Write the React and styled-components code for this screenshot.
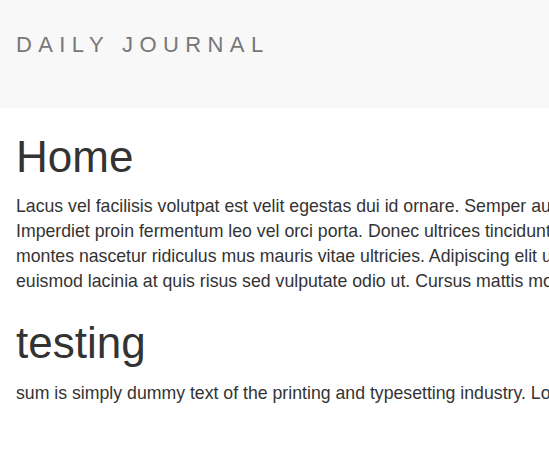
import React from 'react';
import styled, { createGlobalStyle } from 'styled-components';

const homeLines = [
	'Lacus vel facilisis volutpat est velit egestas dui id ornare. Semper auctor neque vitae tempus quam. Sit amet cursus sit amet dictum sit amet justo. Viverra tellus in hac habitasse.',
	'Imperdiet proin fermentum leo vel orci porta. Donec ultrices tincidunt arcu non sodales neque sodales ut. Mattis molestie a iaculis at erat pellentesque adipiscing. Magnis dis parturient',
	'montes nascetur ridiculus mus mauris vitae ultricies. Adipiscing elit ut aliquam purus sit amet luctus venenatis lectus. Ultrices vitae auctor eu augue ut lectus arcu bibendum at. Odio',
	'euismod lacinia at quis risus sed vulputate odio ut. Cursus mattis molestie a iaculis at erat pellentesque adipiscing.',
];

const posts = [
	{
		title: 'testing',
		body: 'sum is simply dummy text of the printing and typesetting industry. Lorem Ipsum has been the industry\'s standard dummy text ever since the 1500s...',
	},
];

/************************************* jsx *************************************/

const App = () => {
	return (
		<>
			<GlobalStyle />
			<Header>
				<Brand>DAILY JOURNAL</Brand>
			</Header>
			<Main>
				<Title>Home</Title>
				<Text>
					{homeLines.map((line, i) => (
						<React.Fragment key={i}>
							{line}
							{i < homeLines.length - 1 && <br />}
						</React.Fragment>
					))}
				</Text>
				{posts.map((post) => (
					<article key={post.title}>
						<Title>{post.title}</Title>
						<Text>{post.body}</Text>
					</article>
				))}
			</Main>
		</>
	);
};

export default App;

/******************************** styled-components ********************************/

const GlobalStyle = createGlobalStyle`
	html, body {
		margin: 0;
		padding: 0;
		background: #ffffff;
		overflow: hidden;
	}
	body {
		font-family: "Liberation Sans", Arial, Helvetica, sans-serif;
		color: #333333;
	}
`;

const Header = styled.header`
	box-sizing: border-box;
	height: 108px;
	padding: 34px 16px 0 16px;
	background: #f8f8f8;
`;

const Brand = styled.div`
	font-size: 22px;
	line-height: 1;
	letter-spacing: 6.4px;
	color: #777777;
	white-space: nowrap;
`;

const Main = styled.main`
	padding: 0 16px;
	white-space: nowrap;
`;

const Title = styled.h1`
	margin: 25px 0 13px 0;
	font-size: 44px;
	font-weight: 400;
	line-height: 1.1;
`;

const Text = styled.p`
	margin: 0;
	font-size: 17.7px;
	line-height: 25px;
`;
